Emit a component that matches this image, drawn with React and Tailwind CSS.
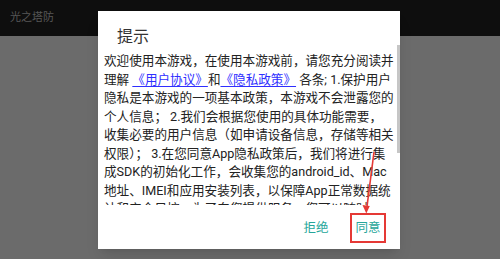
const lines = [
  "欢迎使用本游戏，在使用本游戏前，请您充分阅读并",
  null,
  "隐私是本游戏的一项基本政策，本游戏不会泄露您的",
  "个人信息； 2.我们会根据您使用的具体功能需要，",
  "收集必要的用户信息（如申请设备信息，存储等相关",
  "权限）； 3.在您同意App隐私政策后，我们将进行集",
  "成SDK的初始化工作，会收集您的android_id、Mac",
  "地址、IMEI和应用安装列表，以保障App正常数据统",
  "计和安全风控，为了向您提供服务，您可以随时",
];

export default function App() {
  return (
    <div className="relative w-[500px] h-[259px] overflow-hidden bg-[#6b6b6b] font-['Roboto','Noto_Sans_CJK_SC',sans-serif]">
      {/* app bar (dimmed) */}
      <div className="flex h-9 items-center bg-[#0e0e0e] pl-[10px] text-[11px] text-[#575757]">
        光之塔防
      </div>

      {/* dialog */}
      <div className="absolute left-[98px] top-[11px] flex h-[238px] w-[302px] flex-col bg-white shadow-lg">
        <div className="pl-[19px] pt-[16px] text-[16px] leading-[20px] text-[#333]">提示</div>

        <div className="relative mt-[5px] h-[153px] overflow-hidden pl-[6px] text-[12.6px] leading-[18.5px] text-[#222]">
          {lines.map((l, i) =>
            l ? (
              <div key={i} className="whitespace-nowrap">{l}</div>
            ) : (
              <div key={i} className="whitespace-nowrap">
                理解 <span className="text-[#2f2fff] underline underline-offset-2">《用户协议》</span>和
                <span className="text-[#2f2fff] underline underline-offset-2">《隐私政策》</span> 各条; 1.保护用户
              </div>
            )
          )}
        </div>
        {/* scrollbar */}
        <div className="absolute left-[299px] top-[34px] h-[108px] w-[3px] bg-[#c6c6c6]" />

        <div className="mt-auto mb-[6px] mr-[14px] flex justify-end gap-[18px] text-[12.5px] text-[#26a69a]">
          <button className="flex h-[30px] w-[32px] items-center justify-center">拒绝</button>
          <button className="flex h-[30px] w-[36px] items-center justify-center border-2 border-[#e53935]">同意</button>
        </div>
      </div>

      {/* annotation arrow */}
      <svg className="absolute left-0 top-0" width="500" height="259">
        <line x1="374" y1="152" x2="366.8" y2="208" stroke="#e53935" strokeWidth="1.6" />
        <path d="M362.5 205 L366.3 213.5 L369.8 206 Z" fill="#e53935" />
      </svg>
    </div>
  );
}
